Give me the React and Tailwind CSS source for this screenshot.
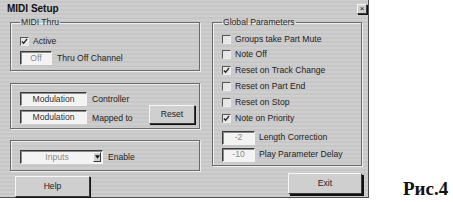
import React from "react";

const sunken =
  "border border-t-[#3a3a3a] border-l-[#3a3a3a] border-r-[#f4f4f4] border-b-[#f4f4f4] shadow-[inset_1px_1px_0_#8a8a8a] bg-[#f3f3f3]";
const raised =
  "border border-t-[#f6f6f6] border-l-[#f6f6f6] border-r-[#3a3a3a] border-b-[#3a3a3a] shadow-[1px_1px_0_#111] bg-[#cfcfcf]";

function CheckBox({ checked, label }) {
  return (
    <div className="flex items-center h-[15.8px]">
      <span className="w-[9px] h-[9px] border border-t-[#555] border-l-[#555] border-r-[#eee] border-b-[#eee] bg-[#e6e6e6] flex items-center justify-center">
        {checked && (
          <svg viewBox="0 0 8 8" className="w-[7px] h-[7px]">
            <path d="M1 4 L3 6 L7 1" fill="none" stroke="#222" strokeWidth="1.4" />
          </svg>
        )}
      </span>
      <span className="ml-[4px] text-[#222]">{label}</span>
    </div>
  );
}

function Field({ value, className, dim }) {
  return (
    <div
      className={`${sunken} h-[14px] flex items-center justify-center ${className} ${
        dim ? "text-[#888]" : "text-[#333]"
      }`}
    >
      {value}
    </div>
  );
}

function Group({ legend, className, children }) {
  return (
    <fieldset
      className={`border border-[#6a6a6a] shadow-[inset_1px_1px_0_#efefef,1px_1px_0_#efefef] pl-[9px] pr-[4px] ${className}`}
    >
      {legend && (
        <legend className="px-[1px] text-[#2a2a2a] leading-[11px]">{legend}</legend>
      )}
      {children}
    </fieldset>
  );
}

export default function App() {
  return (
    <div className="w-[453px] h-[202px] bg-white flex font-['Liberation_Sans',Arial,sans-serif] text-[8.6px] leading-[11px]">
      <div className="w-[369px] h-[198px] border-r border-b border-[#4d4d4d] bg-[#cbcbcb] bg-[repeating-linear-gradient(0deg,#cecece_0px,#cecece_2px,#bfbfbf_3px,#cecece_4px)] flex flex-col">
        <div className="h-[19px] flex items-center justify-between pl-[7px] pr-[1px]">
          <span className="text-[10px] font-bold text-[#111]">MIDI Setup</span>
          <span className={`${raised} w-[10px] h-[10px] flex items-center justify-center text-[8px] leading-none text-[#111]`}>
            ×
          </span>
        </div>
        <div className="flex pl-[10px]">
          <div className="w-[190px] flex flex-col">
            <Group legend="MIDI Thru" className="pb-[5px]">
              <div className="mt-[5px]">
                <CheckBox checked label="Active" />
              </div>
              <div className="flex items-center mt-[2px]">
                <Field value="Off" dim className="w-[32px]" />
                <span className="ml-[5px] text-[#222]">Thru Off Channel</span>
              </div>
            </Group>
            <Group className="mt-[12px] pt-[8px] pb-[4px]">
              <div className="flex items-center">
                <Field value="Modulation" className="w-[67px]" />
                <span className="ml-[5px] text-[#222]">Controller</span>
              </div>
              <div className="flex items-end mt-[4px]">
                <Field value="Modulation" className="w-[67px]" />
                <span className="ml-[5px] text-[#222]">Mapped to</span>
                <button className={`${raised} ml-auto w-[46px] h-[19px] -mt-[5px] text-[#222]`}>
                  Reset
                </button>
              </div>
            </Group>
            <Group className="mt-[11px] pt-[9px] pb-[6px]">
              <div className="flex items-center">
                <div className={`${sunken} w-[83px] h-[14px] flex items-center`}>
                  <span className="flex-1 text-center text-[#8a8a8a]">Inputs</span>
                  <span className={`${raised} w-[8px] h-[10px] mr-[1px] flex items-center justify-center shadow-none`}>
                    <svg viewBox="0 0 6 4" className="w-[5px] h-[4px]">
                      <path d="M0 0 L6 0 L3 4 Z" fill="#111" />
                    </svg>
                  </span>
                </div>
                <span className="ml-[5px] text-[#222]">Enable</span>
              </div>
            </Group>
            <button className={`${raised} mt-[5px] ml-[5px] w-[75px] h-[21px] text-[#222]`}>
              Help
            </button>
          </div>
          <div className="w-[150px] ml-[12px] flex flex-col">
            <Group legend="Global Parameters" className="pl-[3px] pb-[3px]">
              <div className="mt-[3px]">
                <CheckBox label="Groups take Part Mute" />
                <CheckBox label="Note Off" />
                <CheckBox checked label="Reset on Track Change" />
                <CheckBox label="Reset on Part End" />
                <CheckBox label="Reset on Stop" />
                <CheckBox checked label="Note on Priority" />
              </div>
              <div className="flex items-center mt-[5px]">
                <Field value="-2" dim className="w-[33px]" />
                <span className="ml-[4px] text-[#222]">Length Correction</span>
              </div>
              <div className="flex items-center mt-[3px]">
                <Field value="-10" dim className="w-[33px]" />
                <span className="ml-[4px] text-[#222]">Play Parameter Delay</span>
              </div>
            </Group>
            <button className={`${raised} mt-[7px] self-end w-[74px] h-[21px] text-[#222] shadow-[2px_2px_0_#111]`}>
              Exit
            </button>
          </div>
        </div>
      </div>
      <div className="flex items-end pb-[3px] ml-[34px]">
        <span className="font-['Liberation_Serif','Times_New_Roman',serif] font-bold text-[19px] leading-[20px] text-[#111]">
          Рис.4
        </span>
      </div>
    </div>
  );
}
